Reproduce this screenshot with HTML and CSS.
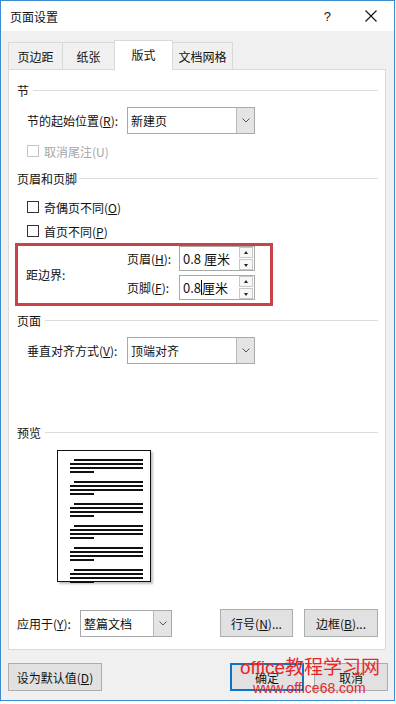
FILE: index.html
```html
<!DOCTYPE html>
<html lang="zh-CN">
<head>
<meta charset="utf-8">
<title>页面设置</title>
<link rel="stylesheet" href="styles.css">
</head>
<body>
<div class="dialog">
  <div class="titlebar">
    <span class="title">页面设置</span>
    <span class="help">?</span>
    <svg class="close" width="12" height="12" viewBox="0 0 12 12"><path d="M0.5 0.5 L11.5 11.5 M11.5 0.5 L0.5 11.5" stroke="#111" stroke-width="1.1" fill="none"/></svg>
  </div>
  <div class="tabs">
    <div class="tab t1">页边距</div>
    <div class="tab t2">纸张</div>
    <div class="tab t3 active">版式</div>
    <div class="tab t4">文档网格</div>
  </div>
  <div class="panel">
    <div class="group-head h-sec">节</div>
    <div class="row r-start">
      <span class="lbl">节的起始位置(<u>R</u>):</span>
      <div class="select s-wide"><span class="val">新建页</span><span class="drop"><svg width="8" height="5" viewBox="0 0 8 5"><path d="M0.5 0.5 L4 4 L7.5 0.5" stroke="#555" stroke-width="1" fill="none"/></svg></span></div>
    </div>
    <div class="check disabled r-endnote"><span class="box"></span><span>取消尾注(U)</span></div>
    <div class="group-head h-hf">页眉和页脚</div>
    <div class="check r-odd"><span class="box"></span><span>奇偶页不同(<u>O</u>)</span></div>
    <div class="check r-first"><span class="box"></span><span>首页不同(<u>P</u>)</span></div>
    <div class="redbox">
      <span class="edge-lbl">距边界:</span>
      <div class="spins">
        <div class="spin-row">
          <span class="slbl">页眉(<u>H</u>):</span>
          <div class="spin"><span class="sval">0.8 厘米</span><span class="arrows"><span class="ar up"></span><span class="ar down"></span></span></div>
        </div>
        <div class="spin-row">
          <span class="slbl">页脚(<u>F</u>):</span>
          <div class="spin"><span class="sval">0.8<i class="caret"></i>厘米</span><span class="arrows"><span class="ar up"></span><span class="ar down"></span></span></div>
        </div>
      </div>
    </div>
    <div class="group-head h-page">页面</div>
    <div class="row r-valign">
      <span class="lbl">垂直对齐方式(<u>V</u>):</span>
      <div class="select s-wide"><span class="val">顶端对齐</span><span class="drop"><svg width="8" height="5" viewBox="0 0 8 5"><path d="M0.5 0.5 L4 4 L7.5 0.5" stroke="#555" stroke-width="1" fill="none"/></svg></span></div>
    </div>
    <div class="group-head h-prev">预览</div>
    <div class="preview">
      <div class="para"><i class="ln ind"></i><i class="ln"></i><i class="ln"></i><i class="ln short"></i></div>
      <div class="para"><i class="ln ind"></i><i class="ln"></i><i class="ln"></i><i class="ln short"></i></div>
      <div class="para"><i class="ln ind"></i><i class="ln"></i><i class="ln"></i><i class="ln short"></i></div>
      <div class="para"><i class="ln ind"></i><i class="ln"></i><i class="ln"></i><i class="ln short"></i></div>
      <div class="para"><i class="ln ind"></i><i class="ln"></i><i class="ln"></i><i class="ln short"></i></div>
      <div class="para"><i class="ln ind"></i><i class="ln"></i><i class="ln"></i><i class="ln short"></i></div>
    </div>
    <div class="apply">
      <span class="alabel">应用于(<u>Y</u>):</span>
      <div class="select s-apply"><span class="val">整篇文档</span><span class="drop"><svg width="8" height="5" viewBox="0 0 8 5"><path d="M0.5 0.5 L4 4 L7.5 0.5" stroke="#555" stroke-width="1" fill="none"/></svg></span></div>
      <div class="btn b-line">行号(<u>N</u>)...</div>
      <div class="btn b-border">边框(<u>B</u>)...</div>
    </div>
  </div>
  <div class="footer">
    <div class="btn b-default">设为默认值(<u>D</u>)</div>
    <div class="btn b-ok">确定</div>
    <div class="btn b-cancel">取消</div>
    <div class="wm1">office教程学习网</div>
    <div class="wm2">www.office68.com</div>
  </div>
</div>
</body>
</html>
```
FILE: styles.css
```css
* { box-sizing: border-box; }
html, body { margin: 0; padding: 0; background: #ffffff; }
body {
  width: 396px; height: 704px; overflow: hidden;
  font-family: "Noto Sans CJK SC", "Noto Sans", sans-serif;
  font-size: 12px; color: #111;
}
u { text-decoration: underline; text-underline-offset: 1px; }
.dialog {
  position: relative;
  width: 395px; height: 701px;
  border: 1px solid #3d8bd1;
  background: #f0f0f0;
  display: flex; flex-direction: column;
}
.titlebar {
  height: 30px; background: #ffffff;
  display: flex; align-items: center;
  padding-left: 9px;
}
.title { font-size: 12px; flex: 1; }
.help { font-family: "Liberation Sans", sans-serif; font-size: 13px; margin-right: 34px; }
.close { margin-right: 17px; }
.tabs {
  height: 38px; display: flex; align-items: flex-end;
  padding-left: 7px;
  position: relative; z-index: 2;
}
.tab {
  height: 27px; border: 1px solid #d9d9d9; border-bottom: none;
  background: #f0f0f0;
  display: flex; align-items: center; justify-content: center;
  margin-left: -1px;
}
.tab.t1 { width: 55px; margin-left: 0; }
.tab.t2 { width: 53px; }
.tab.t3 { width: 59px; }
.tab.t4 { width: 61px; }
.tab.active {
  height: 30px; background: #ffffff; margin-bottom: -1px; position: relative; z-index: 3;
  padding-bottom: 3px;
}
.panel {
  margin: 0 8px 0 7px; height: 581px;
  background: #ffffff; border: 1px solid #d9d9d9;
  padding: 10px 7px 12px 8px;
  display: flex; flex-direction: column;
  position: relative; z-index: 1;
}
.group-head {
  display: flex; align-items: center; height: 20px; gap: 4px;
}
.group-head::after { content: ""; flex: 1; height: 1px; background: #dcdcdc; }
.h-hf { gap: 2px; }
.row { display: flex; align-items: center; padding-left: 10px; height: 27px; }
.lbl { width: 100px; }
.r-start { margin-top: 7px; }
.r-valign { margin-top: 7px; }
.select {
  height: 27px; border: 1px solid #a9a9a9; background: #fff;
  display: flex; align-items: stretch;
}
.s-wide { width: 128px; }
.select .val { flex: 1; display: flex; align-items: center; padding-left: 3px; }
.select .drop {
  width: 18px; background: #e4e4e4; border-left: 1px solid #b9b9b9;
  display: flex; align-items: center; justify-content: center;
}
.check { display: flex; align-items: center; gap: 5px; height: 18px; padding-left: 10px; }
.check .box { width: 12px; height: 12px; border: 1px solid #333; background: #fff; }
.check.disabled { color: #a6a6a6; }
.check.disabled .box { border-color: #c4c4c4; }
.r-endnote { margin-top: 8px; }
.h-hf { margin-top: 8px; }
.r-odd { margin-top: 10px; }
.r-first { margin-top: 6px; }
.redbox {
  margin: 3px 0 0 -2px; width: 258px; height: 63px;
  border: 3px solid #c9414a;
  display: flex; padding: 0 0 3px 8px;
}
.edge-lbl { width: 101px; align-self: center; padding-top: 3px; }
.spins { display: flex; flex-direction: column; gap: 4px; }
.spin-row { display: flex; align-items: center; height: 25px; }
.slbl { width: 52px; }
.spin {
  width: 76px; height: 25px; border: 1px solid #a9a9a9; background: #fff;
  display: flex; align-items: center; padding-left: 3px;
}
.sval { flex: 1; display: flex; align-items: center; font-size: 13px; }
.caret { display: inline-block; width: 1px; height: 15px; background: #000; }
.arrows { display: flex; flex-direction: column; gap: 1px; margin-right: 1px; }
.ar {
  width: 14px; height: 11px; border: 1px solid #c8c8c8; background: #f7f7f7; position: relative;
}
.ar::after {
  content: ""; position: absolute; left: 4px; width: 0; height: 0;
  border-left: 2.5px solid transparent; border-right: 2.5px solid transparent;
}
.ar.up::after { top: 3px; border-bottom: 3px solid #222; }
.ar.down::after { top: 4px; border-top: 3px solid #222; }
.h-page { margin-top: 4px; }
.h-prev { margin-top: 58px; }
.preview {
  margin: 8px 0 0 40px; width: 94px; height: 132px;
  border: 1px solid #111; background: #fff;
  box-shadow: 2px 2px 2px rgba(0,0,0,0.25);
  padding: 8px 7px 0 12px;
  display: flex; flex-direction: column; gap: 8px;
}
.para { display: flex; flex-direction: column; gap: 2px; }
.ln { display: block; height: 2px; background: #111; width: 73px; }
.ln.ind { margin-left: 4px; width: 69px; }
.ln.short { width: 24px; }
.apply { margin-top: auto; display: flex; align-items: center; height: 28px; }
.alabel { width: 63px; }
.s-apply { width: 92px; }
.btn {
  height: 28px; border: 1px solid #adadad; background: #e1e1e1;
  display: flex; align-items: center; justify-content: center;
}
.b-line { width: 73px; margin-left: auto; }
.b-border { width: 74px; margin-left: 11px; }
.footer {
  position: relative; display: flex; align-items: center;
  margin-top: 13px; padding: 0 7px; height: 28px;
}
.b-default { width: 94px; }
.b-ok { width: 74px; margin-left: auto; border: 2px solid #0a74c9; }
.b-cancel { width: 74px; margin-left: 10px; margin-right: -1px; }
.wm1 {
  position: absolute; left: 239px; top: -6px;
  font-family: "Liberation Sans", "Noto Sans CJK SC", sans-serif;
  font-size: 19px; line-height: 22px; color: #e8262a; white-space: nowrap;
}
.wm2 {
  position: absolute; left: 252px; top: 17px;
  font-family: "Liberation Sans", sans-serif;
  font-size: 14px; line-height: 16px; color: #e8262a; white-space: nowrap;
}
```
